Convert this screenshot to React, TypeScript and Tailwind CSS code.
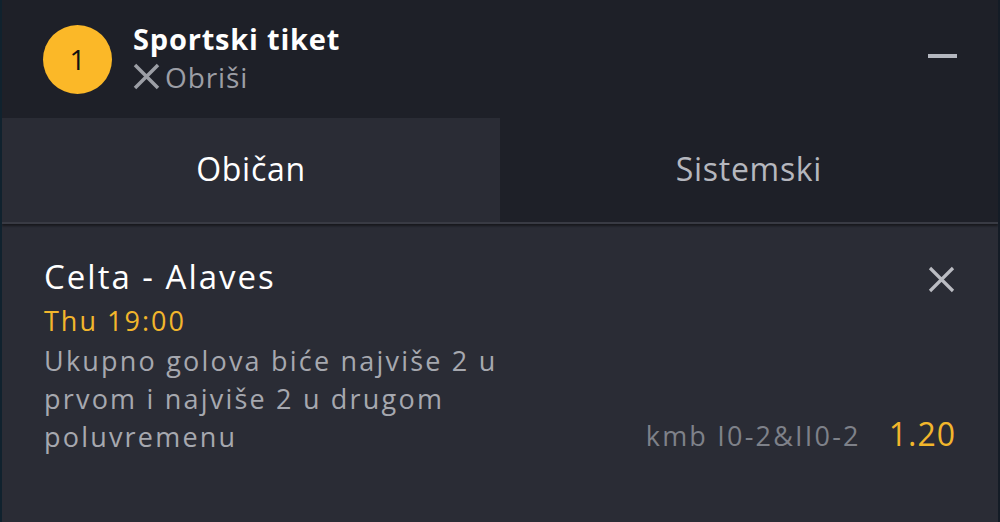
import React from "react";

export default function App() {
  return (
    <div
      className="w-[1000px] h-[522px] overflow-hidden bg-[#2a2c35] flex flex-col border-l-2 border-r-2 border-l-[#10222e] border-r-[#141c26]"
      style={{ fontFamily: '"Open Sans", "Lato", sans-serif' }}
    >
      {/* Header */}
      <div className="h-[118px] bg-[#1e2028] flex items-center pl-[41px] pr-[41px] shrink-0">
        <div className="w-[69px] h-[69px] rounded-full bg-[#fbb828] flex items-center justify-center text-[28px] text-[#111] font-medium leading-none">
          1
        </div>
        <div className="ml-[21px] flex flex-col mt-[-3px]">
          <div className="text-[29px] font-bold text-white leading-[38px] tracking-[0.8px]">Sportski tiket</div>
          <div className="flex items-center text-[28px] text-[#9c9ea5] leading-[38px] tracking-[0.9px]">
            <svg width="27" height="27" viewBox="0 0 27 27" className="mr-[5px]">
              <path d="M2 2 L25 25 M25 2 L2 25" stroke="#9c9ea5" strokeWidth="3.5" strokeLinecap="butt" />
            </svg>
            Obriši
          </div>
        </div>
        <div className="flex-1" />
        <div className="w-[29px] h-[4px] bg-[#b4b7bf] mb-[6px]" />
      </div>
      {/* Tabs */}
      <div className="h-[106px] flex shrink-0 border-b-2 border-[#393b44] shadow-[0_2px_2px_rgba(0,0,0,0.45)]">
        <div className="w-[498px] bg-[#2a2c35] flex items-center justify-center text-[32px] text-white tracking-[0.7px] pb-[2px]">
          Običan
        </div>
        <div className="flex-1 bg-[#1e2028] flex items-center justify-center text-[32px] text-[#b5b7be] tracking-[0.7px] pb-[2px]">
          Sistemski
        </div>
      </div>
      {/* Content */}
      <div className="flex-1 pl-[42px] pr-[42px] pt-[32px] flex">
        <div className="flex-1 flex flex-col">
          <div className="text-[33px] text-white leading-[42px] tracking-[2px]">Celta - Alaves</div>
          <div className="text-[27px] text-[#f2b62c] leading-[38px] tracking-[2px] mt-[4px]">Thu 19:00</div>
          <div className="text-[27px] text-[#a6a8af] leading-[38px] tracking-[2.2px] w-[500px] mt-[2px]">
            Ukupno golova biće najviše 2 u prvom i najviše 2 u drugom poluvremenu
          </div>
        </div>
        <div className="flex flex-col items-end justify-between pb-[64px]">
          <svg width="27" height="27" viewBox="0 0 27 27" className="mt-[10px] mr-[1px]">
            <path d="M2 2 L25 25 M25 2 L2 25" stroke="#babcc2" strokeWidth="3.2" />
          </svg>
          <div className="flex items-baseline">
            <span className="text-[27px] text-[#7e8189] tracking-[2.2px]">kmb I0-2&amp;II0-2</span>
            <span className="ml-[28px] text-[32px] text-[#f2b62c] tracking-[1px]">1.20</span>
          </div>
        </div>
      </div>
    </div>
  );
}
